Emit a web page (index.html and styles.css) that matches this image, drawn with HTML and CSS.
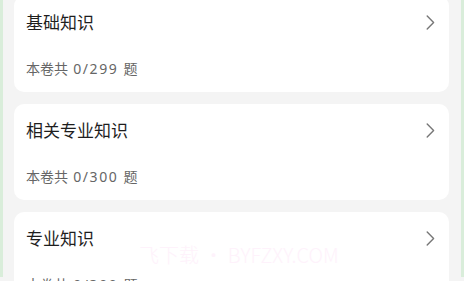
FILE: index.html
```html
<!DOCTYPE html>
<html lang="zh">
<head>
<meta charset="utf-8">
<link rel="stylesheet" href="styles.css">
</head>
<body>
<div class="frame">
  <div class="list">
    <div class="card">
      <div class="head">
        <span class="title">基础知识</span>
        <svg class="chev" width="9" height="15" viewBox="0 0 9 15"><path d="M1.2 1 L7.6 7.5 L1.2 14" fill="none" stroke="#777" stroke-width="1.4" stroke-linecap="round" stroke-linejoin="round"/></svg>
      </div>
      <div class="sub">本卷共 <span class="num">0/299</span> 题</div>
    </div>
    <div class="card">
      <div class="head">
        <span class="title">相关专业知识</span>
        <svg class="chev" width="9" height="15" viewBox="0 0 9 15"><path d="M1.2 1 L7.6 7.5 L1.2 14" fill="none" stroke="#777" stroke-width="1.4" stroke-linecap="round" stroke-linejoin="round"/></svg>
      </div>
      <div class="sub">本卷共 <span class="num">0/300</span> 题</div>
    </div>
    <div class="card">
      <div class="head">
        <span class="title">专业知识</span>
        <svg class="chev" width="9" height="15" viewBox="0 0 9 15"><path d="M1.2 1 L7.6 7.5 L1.2 14" fill="none" stroke="#777" stroke-width="1.4" stroke-linecap="round" stroke-linejoin="round"/></svg>
      </div>
      <div class="sub">本卷共 <span class="num">0/300</span> 题</div>
    </div>
  </div>
  <div class="watermark">飞下载 • BYFZXY.COM</div>
</div>
</body>
</html>
```
FILE: styles.css
```css
html, body {
  margin: 0;
  padding: 0;
  height: 100%;
  overflow: hidden;
}
body {
  background: #f4f4f4;
  font-family: "Noto Sans CJK SC", "Noto Sans", sans-serif;
}
.frame {
  position: relative;
  height: 100%;
  border-left: 3px solid #d9edda;
  border-right: 3px solid #d9edda;
  box-sizing: border-box;
  padding: 0 12px 0 11px;
}
.list {
  display: flex;
  flex-direction: column;
  gap: 12px;
  margin-top: -4px;
}
.card {
  background: #ffffff;
  border-radius: 10px;
  height: 96px;
  box-sizing: border-box;
  padding: 14px 14px 14px 12px;
  display: flex;
  flex-direction: column;
}
.head {
  display: flex;
  align-items: center;
  justify-content: space-between;
  height: 24px;
}
.title {
  font-size: 17px;
  line-height: 24px;
  color: #1e1e1e;
}
.chev {
  display: block;
}
.sub {
  margin-top: 24px;
  font-size: 14px;
  line-height: 20px;
  color: #666;
  word-spacing: 2px;
}
.num {
  font-family: "Noto Sans", sans-serif;
  letter-spacing: 1.6px;
}
.watermark {
  position: absolute;
  left: 136px;
  top: 246px;
  font-size: 20px;
  line-height: 26px;
  font-weight: 300;
  color: #fef2fb;
  white-space: nowrap;
}
```
